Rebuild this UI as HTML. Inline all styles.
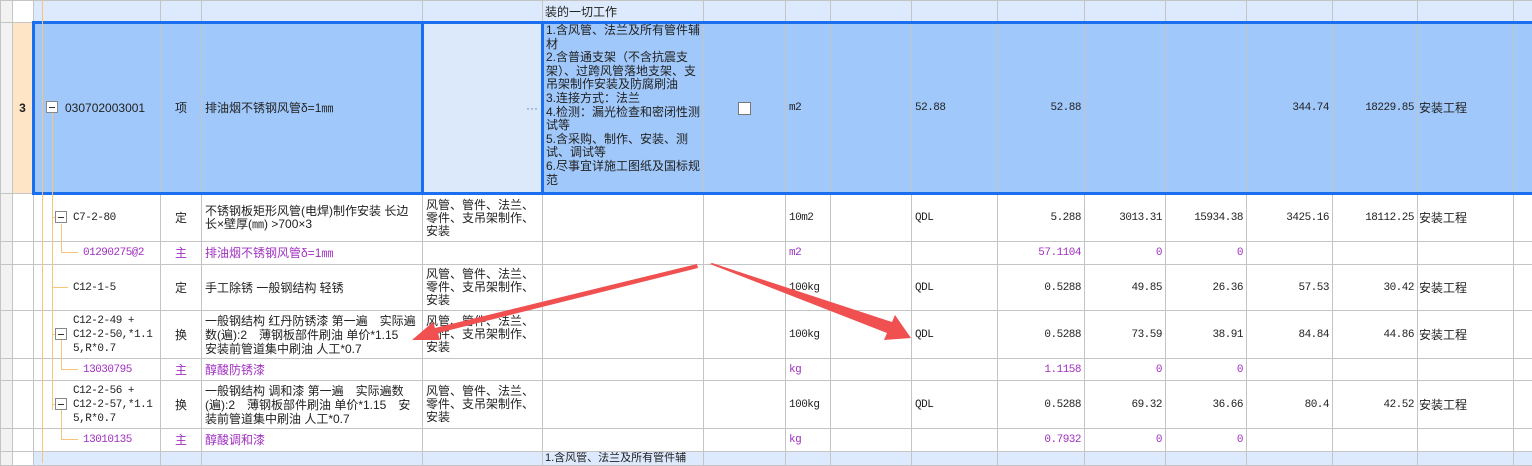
<!DOCTYPE html>
<html><head><meta charset="utf-8"><style>
*{margin:0;padding:0;box-sizing:border-box}
body{width:1532px;height:463px;overflow:hidden;background:#fff;font-family:"Liberation Sans","Noto Sans CJK SC",sans-serif;font-size:12px;color:#222;position:relative}
table{border-collapse:collapse;table-layout:fixed;position:absolute;left:0;top:0;width:1533px}
td{border:1px solid #c4c4c4;vertical-align:middle;padding:0 3px;line-height:14px;white-space:nowrap;overflow:hidden}
td.w{white-space:normal;word-break:break-all}
td.r{text-align:right}
td.c{text-align:center}
.m{font-family:"Liberation Mono","Noto Sans CJK SC",monospace;font-size:11px;letter-spacing:-0.5px}
.p{color:#a030c0}
tr.lb td{background:#dde9fc}
tr.sel td{background:#a0c8fa;border-top:3px solid #1a6ff0;border-bottom:3px solid #1a6ff0}
td.g{background:#f2f2f2!important;border-top:1px solid #c4c4c4!important;border-bottom:1px solid #c4c4c4!important}
.small{font-size:12px;line-height:13.6px;padding:0 2px}
.a{position:absolute}
.box{position:absolute;width:12px;height:12px;border:1px solid #888;background:#fff}
.box:after{content:"";position:absolute;left:2px;top:5px;width:6px;height:1px;background:#333}
.vl{position:absolute;width:1px;background:#f6c57a}
.hl{position:absolute;height:1px;background:#f6c57a}
</style></head><body>
<table>
<colgroup><col style="width:12px"><col style="width:21px"><col style="width:127px"><col style="width:41px"><col style="width:221px"><col style="width:120px"><col style="width:161px"><col style="width:82px"><col style="width:45px"><col style="width:81px"><col style="width:86px"><col style="width:87px"><col style="width:81px"><col style="width:81px"><col style="width:86px"><col style="width:85px"><col style="width:96px"><col style="width:20px"></colgroup>
<tr class="lb" style="height:22px"><td class="g"></td><td style="background:#fff"></td><td></td><td></td><td></td><td></td><td class="w small" style="vertical-align:bottom;padding-bottom:1px">装的一切工作</td><td></td><td></td><td></td><td></td><td></td><td></td><td></td><td></td><td></td><td></td><td></td></tr>
<tr class="sel" style="height:171px"><td class="g"></td><td style="background:#fde5c6!important;font-weight:bold;text-align:center;padding:0;border-top:1px solid #c4c4c4;border-bottom:1px solid #c4c4c4">3</td><td style="padding-left:30px;border-left:3px solid #1a6ff0">030702003001</td><td class="c">项</td><td>排油烟不锈钢风管δ=1㎜</td><td style="background:#dce9fb;border:3px solid #1a6ff0;text-align:right;color:#4a7ab0">···</td><td class="w small" style="vertical-align:top;padding-top:0">1.含风管、法兰及所有管件辅材<br>2.含普通支架（不含抗震支架）、过跨风管落地支架、支吊架制作安装及防腐刷油<br>3.连接方式：法兰<br>4.检测：漏光检查和密闭性测试等<br>5.含采购、制作、安装、测试、调试等<br>6.尽事宜详施工图纸及国标规范</td><td class="c"><span style="display:inline-block;width:13px;height:13px;border:1px solid #777;background:#fff;vertical-align:middle"></span></td><td class="m">m2</td><td></td><td class="m">52.88</td><td class="m r">52.88</td><td></td><td></td><td class="m r">344.74</td><td class="m r">18229.85</td><td style="padding-left:1px">安装工程</td><td></td><td style="border-right:3px solid #1a6ff0"></td></tr>
<tr style="height:48px"><td class="g"></td><td></td><td style="padding-left:39px" class="m">C7-2-80</td><td class="c">定</td><td class="w" style="line-height:13px">不锈钢板矩形风管(电焊)制作安装 长边长×壁厚(㎜) &gt;700×3</td><td class="w" style="line-height:13px">风管、管件、法兰、零件、支吊架制作、安装</td><td></td><td></td><td class="m">10m2</td><td></td><td class="m">QDL</td><td class="m r">5.288</td><td class="m r">3013.31</td><td class="m r">15934.38</td><td class="m r">3425.16</td><td class="m r">18112.25</td><td style="padding-left:1px">安装工程</td><td></td></tr>
<tr style="height:23px" class="p"><td class="g"></td><td></td><td style="padding-left:49px" class="m">01290275@2</td><td class="c">主</td><td>排油烟不锈钢风管δ=1㎜</td><td></td><td></td><td></td><td class="m">m2</td><td></td><td></td><td class="m r">57.1104</td><td class="m r">0</td><td class="m r">0</td><td></td><td></td><td></td><td></td></tr>
<tr style="height:46px"><td class="g"></td><td></td><td style="padding-left:39px" class="m">C12-1-5</td><td class="c">定</td><td>手工除锈 一般钢结构 轻锈</td><td class="w" style="line-height:13px">风管、管件、法兰、零件、支吊架制作、安装</td><td></td><td></td><td class="m">100kg</td><td></td><td class="m">QDL</td><td class="m r">0.5288</td><td class="m r">49.85</td><td class="m r">26.36</td><td class="m r">57.53</td><td class="m r">30.42</td><td style="padding-left:1px">安装工程</td><td></td></tr>
<tr style="height:48px"><td class="g"></td><td></td><td style="padding-left:39px;white-space:normal;line-height:14px" class="m">C12-2-49 +<br>C12-2-50,*1.1<br>5,R*0.7</td><td class="c">换</td><td class="w" style="line-height:14px">一般钢结构 红丹防锈漆 第一遍　实际遍数(遍):2　薄钢板部件刷油 单价*1.15　安装前管道集中刷油 人工*0.7</td><td class="w" style="line-height:13px">风管、管件、法兰、零件、支吊架制作、安装</td><td></td><td></td><td class="m">100kg</td><td></td><td class="m">QDL</td><td class="m r">0.5288</td><td class="m r">73.59</td><td class="m r">38.91</td><td class="m r">84.84</td><td class="m r">44.86</td><td style="padding-left:1px">安装工程</td><td></td></tr>
<tr style="height:22px" class="p"><td class="g"></td><td></td><td style="padding-left:49px" class="m">13030795</td><td class="c">主</td><td>醇酸防锈漆</td><td></td><td></td><td></td><td class="m">kg</td><td></td><td></td><td class="m r">1.1158</td><td class="m r">0</td><td class="m r">0</td><td></td><td></td><td></td><td></td></tr>
<tr style="height:48px"><td class="g"></td><td></td><td style="padding-left:39px;white-space:normal;line-height:14px" class="m">C12-2-56 +<br>C12-2-57,*1.1<br>5,R*0.7</td><td class="c">换</td><td class="w" style="line-height:14px">一般钢结构 调和漆 第一遍　实际遍数(遍):2　薄钢板部件刷油 单价*1.15　安装前管道集中刷油 人工*0.7</td><td class="w" style="line-height:13px">风管、管件、法兰、零件、支吊架制作、安装</td><td></td><td></td><td class="m">100kg</td><td></td><td class="m">QDL</td><td class="m r">0.5288</td><td class="m r">69.32</td><td class="m r">36.66</td><td class="m r">80.4</td><td class="m r">42.52</td><td style="padding-left:1px">安装工程</td><td></td></tr>
<tr style="height:23px" class="p"><td class="g"></td><td></td><td style="padding-left:49px" class="m">13010135</td><td class="c">主</td><td>醇酸调和漆</td><td></td><td></td><td></td><td class="m">kg</td><td></td><td></td><td class="m r">0.7932</td><td class="m r">0</td><td class="m r">0</td><td></td><td></td><td></td><td></td></tr>
<tr class="lb" style="height:14px"><td class="g"></td><td style="background:#fff"></td><td></td><td></td><td></td><td></td><td class="small" style="vertical-align:top;line-height:12px;font-size:11px">1.含风管、法兰及所有管件辅</td><td></td><td></td><td></td><td></td><td></td><td></td><td></td><td></td><td></td><td></td><td></td></tr>
</table>
<div class="vl" style="left:42px;top:0;height:463px"></div>
<div class="vl" style="left:52px;top:113px;height:297px"></div>
<div class="vl" style="left:61px;top:224px;height:28px"></div>
<div class="hl" style="left:61px;top:252px;width:17px"></div>
<div class="hl" style="left:52px;top:287px;width:16px"></div>
<div class="hl" style="left:52px;top:217px;width:4px"></div>
<div class="hl" style="left:52px;top:334px;width:4px"></div>
<div class="hl" style="left:52px;top:404px;width:4px"></div>
<div class="vl" style="left:61px;top:340px;height:29px"></div>
<div class="hl" style="left:61px;top:369px;width:17px"></div>
<div class="vl" style="left:61px;top:410px;height:29px"></div>
<div class="hl" style="left:61px;top:439px;width:17px"></div>
<div class="box" style="left:46px;top:101px"></div>
<div class="box" style="left:55px;top:211px"></div>
<div class="box" style="left:55px;top:328px"></div>
<div class="box" style="left:55px;top:398px"></div>
<svg class="a" style="left:0;top:0" width="1532" height="463">
<g fill="#f05050">
<polygon points="697,264 698,268 438,333 440,340 412,340 433,322 435,328"/>
<polygon points="710,264 712,263 892,322 895,315 911,338 884,340 887,333"/>
</g>
</svg>
</body></html>
